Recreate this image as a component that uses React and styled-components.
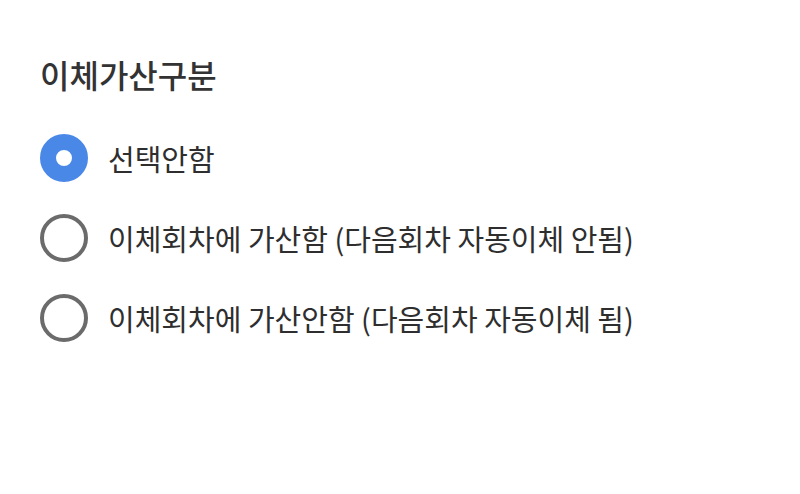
import React, { useState } from 'react'
import styled, { createGlobalStyle } from 'styled-components'

const GlobalStyle = createGlobalStyle`
    html, body {
        margin: 0;
        padding: 0;
        background: #ffffff;
    }
    body {
        font-family: "Noto Sans CJK KR", "Noto Sans", sans-serif;
        color: #333333;
    }
`

const Page = styled.main`
    padding: 56px 40px 0 40px;
`

const Title = styled.h2`
    margin: 0 0 42px 0;
    font-size: 32px;
    line-height: 36px;
    font-weight: 500;
    color: #333333;
`

const Options = styled.div`
    display: flex;
    flex-direction: column;
    gap: 32px;
`

const Option = styled.label`
    display: flex;
    align-items: center;
    gap: 20px;
    height: 48px;
    cursor: pointer;
`

const Circle = styled.span`
    box-sizing: border-box;
    width: 48px;
    height: 48px;
    border-radius: 50%;
    flex-shrink: 0;
    ${props => props.checked
        ? `border: 16px solid #4a88e8; background: #ffffff;`
        : `border: 4px solid #6b6b6b; background: #ffffff;`}
`

const Label = styled.span`
    font-size: 29px;
    line-height: 48px;
    color: #2e2e2e;
    white-space: nowrap;
`

const options = [
    '선택안함',
    '이체회차에 가산함 (다음회차 자동이체 안됨)',
    '이체회차에 가산안함 (다음회차 자동이체 됨)',
]

export default function App() {
    const [selected, setSelected] = useState(0)

    return (<>
        <GlobalStyle />
        <Page>
            <Title>이체가산구분</Title>
            <Options>
                {options.map((text, i) => (
                    <Option key={i} onClick={() => setSelected(i)}>
                        <Circle checked={selected === i} />
                        <Label>{text}</Label>
                    </Option>
                ))}
            </Options>
        </Page>
    </>)
}
